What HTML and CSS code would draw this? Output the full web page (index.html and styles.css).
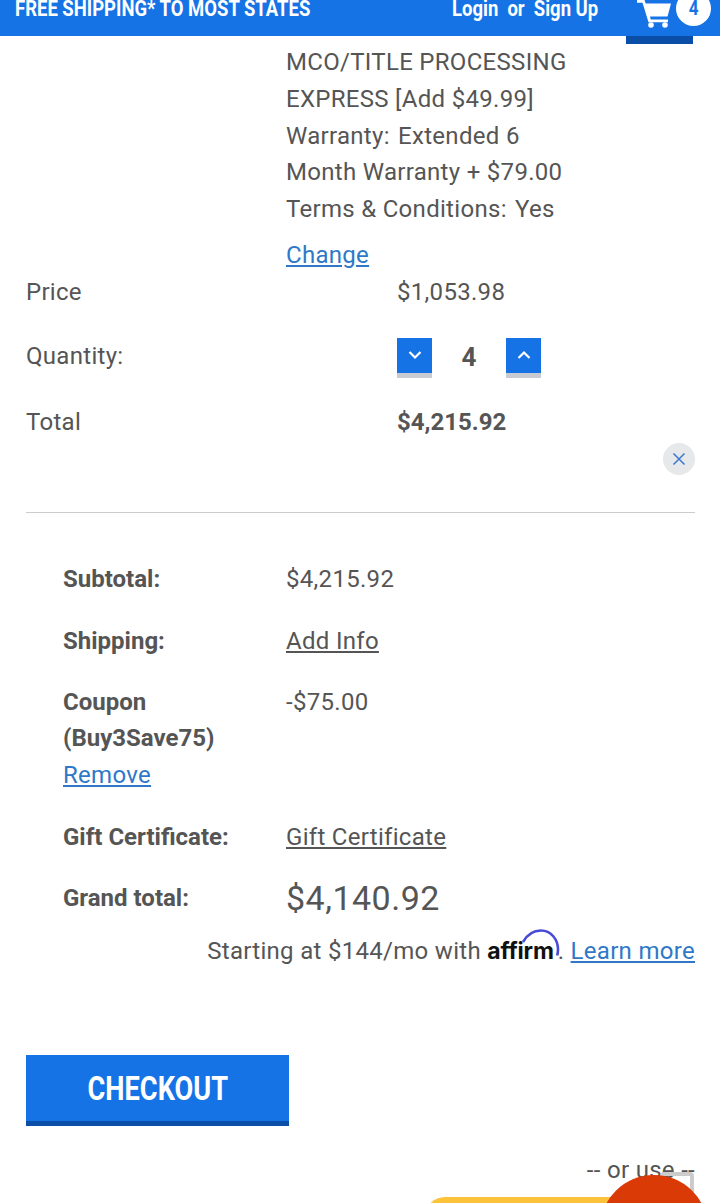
FILE: index.html
```html
<!DOCTYPE html>
<html lang="en">
<head>
  <meta charset="UTF-8">
  <meta name="viewport" content="width=device-width, initial-scale=1.0">
  <title>Cart</title>
  <link rel="stylesheet" href="styles.css">
</head>
<body>

  <header class="topbar">
    <span class="promo"><span class="squeeze">FREE SHIPPING* TO MOST STATES</span></span>
    <span class="account"><span class="squeeze">Login &nbsp;or &nbsp;Sign Up</span></span>
    <div class="cart-tab">
      <svg class="cart-icon" width="34" height="28" viewBox="0 0 34 28">
        <path d="M0 0h7.500l1.200 3.500H34l-3.500 13H13l.7 3H31v2.800H11.500L5.500 2.800H0z" fill="#fff"/>
        <circle cx="14" cy="25" r="2.800" fill="#fff"/>
        <circle cx="28" cy="25" r="2.800" fill="#fff"/>
      </svg>
      <span class="cart-count"><span class="squeeze-num">4</span></span>
    </div>
  </header>

  <main class="page">
    <div class="item-options">
      MCO/TITLE PROCESSING<br>
      EXPRESS [Add $49.99]<br>
      Warranty: <span class="opt-val">Extended 6</span><br>
      Month Warranty + $79.00<br>
      Terms &amp; Conditions: <span class="opt-val">Yes</span>
      <a class="link change-link" href="#">Change</a>
    </div>

    <div class="cart-row price-row">
      <span>Price</span>
      <span>$1,053.98</span>
    </div>
    <div class="cart-row qty-row">
      <span class="qty-label">Quantity:</span>
      <div class="qty">
        <button class="qty-btn" type="button">
          <svg width="14" height="10" viewBox="0 0 14 10"><path d="M1.500 2l5.500 5.500L12.500 2" fill="none" stroke="#fff" stroke-width="2.200"/></svg>
        </button>
        <span class="qty-num">4</span>
        <button class="qty-btn" type="button">
          <svg width="14" height="10" viewBox="0 0 14 10"><path d="M1.500 8L7 2.500 12.500 8" fill="none" stroke="#fff" stroke-width="2.200"/></svg>
        </button>
      </div>
    </div>
    <div class="cart-row total-row">
      <span>Total</span>
      <strong>$4,215.92</strong>
    </div>

    <div class="remove-wrap">
      <button class="remove-btn" type="button">
        <svg width="14" height="14" viewBox="0 0 14 14"><path d="M1.500 1.500l11 11M12.500 1.500l-11 11" fill="none" stroke="#3a78d0" stroke-width="1.500"/></svg>
      </button>
    </div>

    <hr class="divider">

    <div class="summary">
      <div class="summary-row">
        <span class="label">Subtotal:</span>
        <span>$4,215.92</span>
      </div>
      <div class="summary-row shipping-row">
        <span class="label">Shipping:</span>
        <a class="plain-link" href="#">Add Info</a>
      </div>
      <div class="summary-row">
        <div>
          <span class="label">Coupon<br>(Buy3Save75)</span><br>
          <a class="link" href="#">Remove</a>
        </div>
        <span>-$75.00</span>
      </div>
      <div class="summary-row gift-row">
        <span class="label">Gift Certificate:</span>
        <a class="plain-link" href="#">Gift Certificate</a>
      </div>
      <div class="summary-row grand-row">
        <span class="label">Grand total:</span>
        <span class="grand">$4,140.92</span>
      </div>
    </div>

    <p class="affirm-line">
      Starting at $144/mo with
      <span class="affirm">affirm<svg class="affirm-arc" width="40" height="32" viewBox="0 0 40 32"><path d="M2 13C7 4 14 1.500 20 1.500c10 0 17 9 17 19 0 2-.3 4-.8 6" fill="none" stroke="#4a4ad8" stroke-width="2.600"/></svg></span>. <a class="link" href="#">Learn more</a>
    </p>

    <button class="checkout" type="button"><span class="squeeze">CHECKOUT</span></button>

    <p class="or-use">-- or use --</p>
  </main>

  <div class="paypal-btn"></div>
  <div class="chat-close"></div>
  <div class="chat-bubble"></div>

</body>
</html>
```

FILE: styles.css
```css
html, body {
  margin: 0;
  padding: 0;
  height: 1203px;
  overflow: hidden;
  background: #fff;
}

body {
  position: relative;
  font-family: Roboto, "Liberation Sans", sans-serif;
  font-size: 24px;
  letter-spacing: 0.3px;
  color: #555;
}

a {
  color: inherit;
}

strong {
  letter-spacing: 0;
}

.topbar {
  display: flex;
  align-items: flex-start;
  height: 36px;
  background-color: #1673e6;
  color: #fff;
  font-weight: 700;
  font-size: 22px;
  line-height: 18px;
  letter-spacing: 0;
  position: relative;
}

.squeeze {
  display: inline-block;
  white-space: nowrap;
  transform: scaleX(0.84);
  transform-origin: left center;
}

.promo {
  width: 437px;
  padding-left: 15px;
}

.account {
  width: 186px;
}

.cart-tab {
  position: absolute;
  left: 626px;
  top: 0;
  width: 67px;
  height: 36px;
  border-bottom: 8px solid #0b4ea8;
}

.cart-icon {
  position: absolute;
  left: 11px;
  top: 0;
}

.cart-count {
  position: absolute;
  left: 50px;
  top: -9px;
  width: 35px;
  height: 35px;
  border-radius: 50%;
  background: #fff;
  color: #1673e6;
  font-size: 20px;
  line-height: 35px;
  text-align: center;
}

.squeeze-num {
  display: inline-block;
  transform: scaleX(0.85);
}

.page {
  padding: 8px 25px 0 26px;
}

.item-options {
  padding-left: 260px;
  line-height: 36.8px;
}

.opt-val {
  margin-left: 2px;
}

.link {
  color: #2f78c8;
  text-decoration: underline;
}

.change-link {
  display: block;
  margin-top: 9px;
  line-height: 37px;
}

.cart-row {
  display: grid;
  grid-template-columns: 371px 1fr;
  align-items: center;
}

.price-row {
  height: 37px;
}

.qty-row {
  margin-top: 27px;
  height: 40px;
}

.qty-label {
  padding-bottom: 4px;
}

.total-row {
  margin-top: 24px;
  height: 40px;
}

.qty {
  display: flex;
  align-items: center;
}

.qty-btn {
  width: 35px;
  height: 40px;
  padding: 0;
  border: none;
  border-bottom: 5px solid #c8ccd2;
  background: #1673e6;
  background-clip: padding-box;
  display: flex;
  align-items: center;
  justify-content: center;
  box-sizing: border-box;
}

.qty-num {
  width: 74px;
  padding-bottom: 2px;
  text-align: center;
  font-weight: 700;
  font-size: 26px;
  letter-spacing: 0;
}

.remove-wrap {
  display: flex;
  justify-content: flex-end;
  margin-top: 1px;
}

.remove-btn {
  width: 32px;
  height: 32px;
  padding: 0;
  border: none;
  border-radius: 50%;
  background: #e6e8ea;
  display: flex;
  align-items: center;
  justify-content: center;
}

.divider {
  margin: 37px 0 0;
  border: none;
  border-top: 1px solid #ccc;
}

.summary {
  padding: 48px 0 0 37px;
  line-height: 36.8px;
}

.summary-row {
  display: grid;
  grid-template-columns: 223px 1fr;
  align-items: start;
  margin-bottom: 25px;
}

.shipping-row {
  margin-bottom: 24px;
}

.gift-row {
  margin-bottom: 22px;
}

.label {
  font-weight: 700;
  letter-spacing: 0;
}

.plain-link {
  justify-self: start;
}

.grand-row {
  margin-bottom: 0;
  line-height: 41px;
}

.grand {
  font-size: 34px;
  letter-spacing: 0.5px;
}

.affirm-line {
  margin: 14px 0 0;
  text-align: right;
  line-height: 36.8px;
}

.affirm {
  position: relative;
  display: inline-block;
  padding-right: 4px;
  font-family: Inter, sans-serif;
  font-weight: 700;
  font-size: 23px;
  color: #111;
  letter-spacing: -0.2px;
}

.affirm-arc {
  position: absolute;
  right: -3px;
  top: -4px;
}

.checkout {
  display: block;
  width: 263px;
  height: 71px;
  margin-top: 85px;
  padding: 0;
  border: none;
  border-bottom: 5px solid #0b4ea8;
  background: #1673e6;
  color: #fff;
  font-family: Roboto, sans-serif;
  font-weight: 700;
  font-size: 34px;
  text-align: center;
}

.checkout .squeeze {
  transform: scaleX(0.8);
  transform-origin: center;
}

.or-use {
  margin: 26px 0 0;
  text-align: right;
  line-height: 36px;
}

.paypal-btn {
  position: absolute;
  left: 425px;
  top: 1197px;
  width: 270px;
  height: 60px;
  border-radius: 20px;
  background: #ffc33b;
}

.chat-close {
  position: absolute;
  left: 660px;
  top: 1172px;
  width: 26px;
  height: 26px;
  border: 4px solid #ccc;
  border-radius: 4px;
}

.chat-bubble {
  position: absolute;
  left: 600px;
  top: 1175px;
  width: 108px;
  height: 108px;
  border-radius: 50%;
  background: #d93a06;
}
```
